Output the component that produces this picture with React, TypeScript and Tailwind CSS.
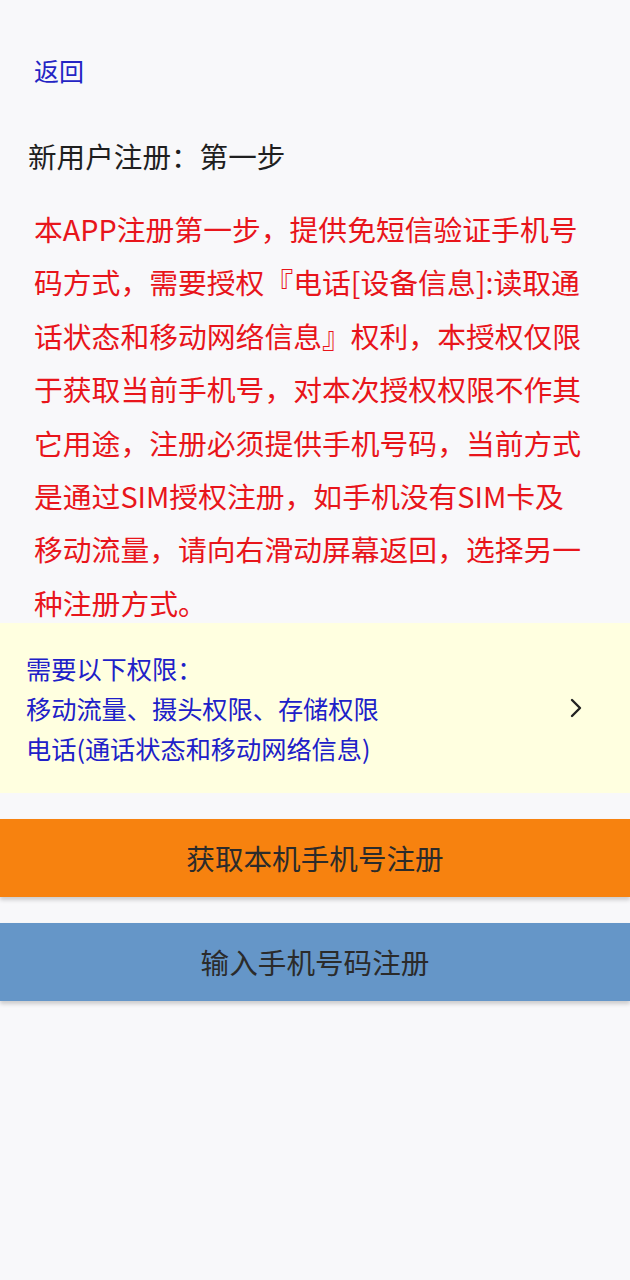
const lines = [
  "本APP注册第一步，提供免短信验证手机号",
  "码方式，需要授权『电话[设备信息]:读取通",
  "话状态和移动网络信息』权利，本授权仅限",
  "于获取当前手机号，对本次授权权限不作其",
  "它用途，注册必须提供手机号码，当前方式",
  "是通过SIM授权注册，如手机没有SIM卡及",
  "移动流量，请向右滑动屏幕返回，选择另一",
  "种注册方式。",
]

const App: React.FC = () => {
  return (
    <div
      className="min-h-[1280px] w-[630px] bg-[#f8f8fa]"
      style={{ fontFamily: '"Noto Sans CJK SC", "Noto Sans", sans-serif' }}
    >
      <div className="pt-[52px] pl-[34px]">
        <button className="text-[25px] leading-[36px] text-[#2424c4]">返回</button>
      </div>

      <div className="mt-[48px] pl-[28px] text-[28.6px] leading-[40px] text-[#1f1f1f]">
        新用户注册：第一步
      </div>

      <div className="mt-[26px] pl-[34px] text-[28.8px] leading-[53.4px] text-[#e8151b]">
        {lines.map((l) => (
          <div key={l} className="whitespace-nowrap">
            {l}
          </div>
        ))}
      </div>

      <div className="mt-[-6px] flex h-[170px] items-center justify-between bg-[#ffffe0] pl-[26px] pr-[48px]">
        <div className="text-[25.2px] leading-[40px] text-[#2020c8]">
          <div>需要以下权限：</div>
          <div>移动流量、摄头权限、存储权限</div>
          <div>电话(通话状态和移动网络信息)</div>
        </div>
        <svg width="12" height="20" viewBox="0 0 12 20" fill="none">
          <path d="M2 2l8 8-8 8" stroke="#222" strokeWidth="2.4" strokeLinecap="round" strokeLinejoin="round" />
        </svg>
      </div>

      <div className="mt-[26px] flex flex-col gap-[26px]">
        <button className="h-[78px] w-full bg-[#f7820f] text-[28.6px] text-[#2b2b2b] shadow-[0_3px_4px_rgba(0,0,0,0.18)]">
          获取本机手机号注册
        </button>
        <button className="h-[78px] w-full bg-[#6596c8] text-[28.6px] text-[#2b2b2b] shadow-[0_3px_4px_rgba(0,0,0,0.18)]">
          输入手机号码注册
        </button>
      </div>
    </div>
  )
}

export default App
